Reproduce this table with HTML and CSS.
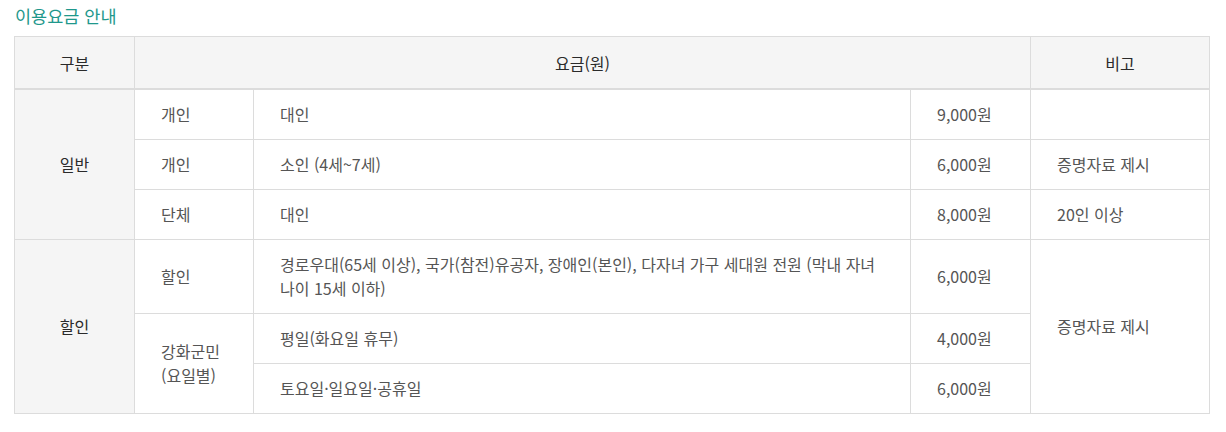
FILE: index.html
```html
<!DOCTYPE html>
<html lang="ko">
<head>
<meta charset="utf-8">
<link rel="stylesheet" href="styles.css">
</head>
<body>
<div class="page">
  <h3 class="title">이용요금 안내</h3>
  <table class="fee">
    <colgroup>
      <col class="c1"><col class="c2"><col class="c3"><col class="c4"><col class="c5">
    </colgroup>
    <thead>
      <tr>
        <th>구분</th>
        <th colspan="3">요금(원)</th>
        <th>비고</th>
      </tr>
    </thead>
    <tbody>
      <tr>
        <td class="group" rowspan="3">일반</td>
        <td>개인</td>
        <td>대인</td>
        <td>9,000원</td>
        <td></td>
      </tr>
      <tr>
        <td>개인</td>
        <td>소인 (4세~7세)</td>
        <td>6,000원</td>
        <td>증명자료 제시</td>
      </tr>
      <tr>
        <td>단체</td>
        <td>대인</td>
        <td>8,000원</td>
        <td>20인 이상</td>
      </tr>
      <tr>
        <td class="group" rowspan="3">할인</td>
        <td>할인</td>
        <td>경로우대(65세 이상), 국가(참전)유공자, 장애인(본인), 다자녀 가구 세대원 전원 (막내 자녀 나이 15세 이하)</td>
        <td>6,000원</td>
        <td rowspan="3">증명자료 제시</td>
      </tr>
      <tr>
        <td rowspan="2">강화군민<br>(요일별)</td>
        <td>평일(화요일 휴무)</td>
        <td>4,000원</td>
      </tr>
      <tr>
        <td>토요일·일요일·공휴일</td>
        <td>6,000원</td>
      </tr>
    </tbody>
  </table>
</div>
</body>
</html>
```

FILE: styles.css
```css
html, body {
  margin: 0;
  padding: 0;
  background: #fff;
}
body {
  font-family: "Noto Sans CJK KR", "Noto Sans", sans-serif;
  font-size: 16px;
  color: #555;
}
.page {
  padding: 4px 14px 0 14px;
}
.title {
  margin: 0 0 8px 1px;
  font-size: 17.5px;
  line-height: 24px;
  font-weight: 400;
  color: #1f988c;
}
.fee {
  width: 1196px;
  border-collapse: collapse;
  table-layout: fixed;
  border: 1px solid #dcdcdc;
}
.c1 { width: 120px; }
.c2 { width: 119px; }
.c3 { width: 657px; }
.c4 { width: 120px; }
.c5 { width: 179px; }
.fee th {
  background: #f5f5f5;
  color: #2a2a2a;
  font-weight: 400;
  font-size: 16px;
  line-height: 24px;
  padding: 14px 10px 13px;
  border: 1px solid #dcdcdc;
  border-bottom: 2px solid #dcdcdc;
  text-align: center;
}
.fee td {
  border: 1px solid #dcdcdc;
  padding: 12px 20px 13px 26px;
  line-height: 24px;
  text-align: left;
  vertical-align: middle;
}
.fee td.group {
  background: #f5f5f5;
  color: #2a2a2a;
  text-align: center;
  padding-left: 10px;
  padding-right: 10px;
}
```
